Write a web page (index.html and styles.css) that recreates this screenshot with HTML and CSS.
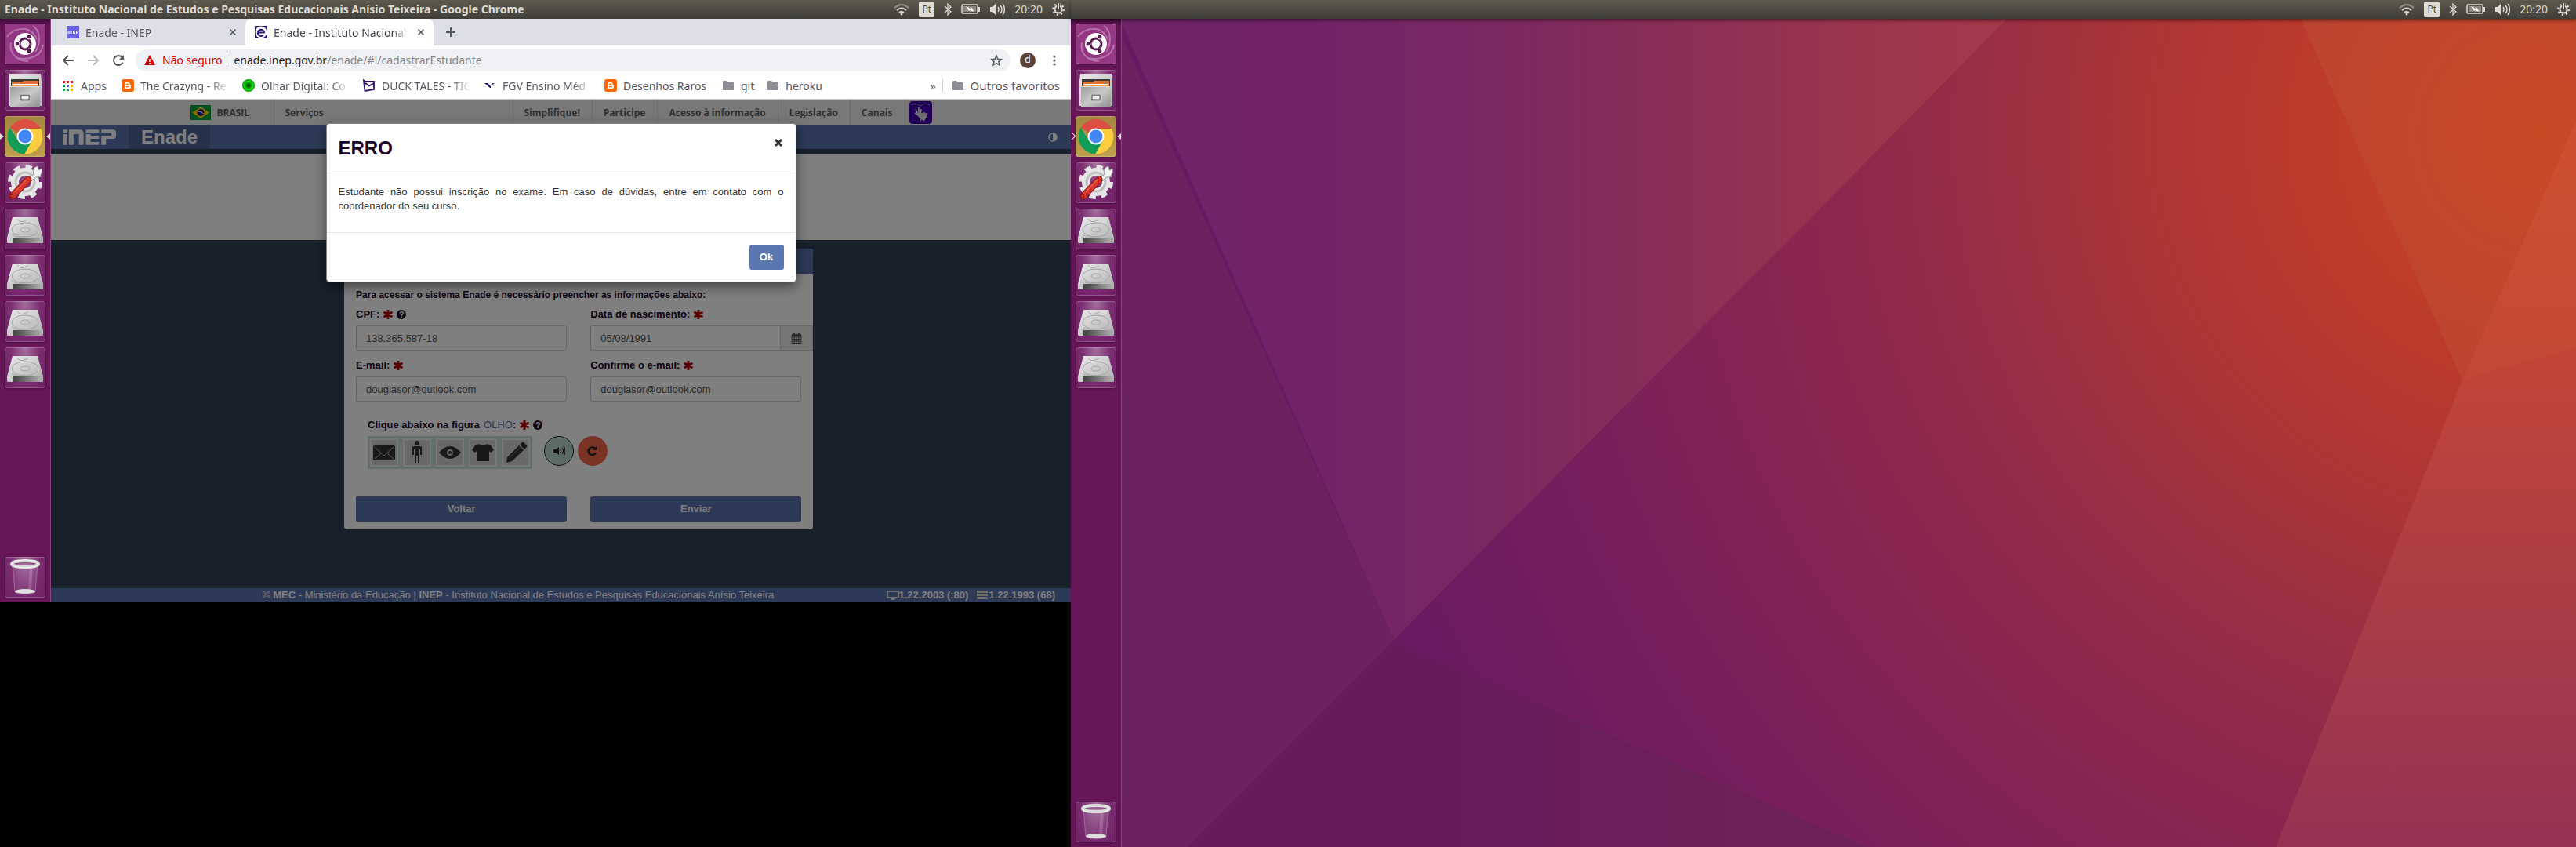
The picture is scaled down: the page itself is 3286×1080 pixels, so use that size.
FILE: index.html
```html
<!DOCTYPE html>
<html lang="pt-BR">
<head>
<meta charset="utf-8">
<title>Enade - Instituto Nacional de Estudos e Pesquisas Educacionais Anísio Teixeira</title>
<link rel="stylesheet" href="styles.css">
</head>
<body>
<svg class="sprite" aria-hidden="true">
  <defs>
    <linearGradient id="metal" x1="0" y1="0" x2="1" y2="1"><stop offset="0" stop-color="#ececec"/><stop offset="1" stop-color="#b4b4b4"/></linearGradient>
    <linearGradient id="edge" x1="0" x2="1"><stop offset="0" stop-color="#3b3b3b"/><stop offset=".25" stop-color="#4d4d4d"/><stop offset="1" stop-color="#b5b5b5"/></linearGradient>
    <linearGradient id="front" x1="0" y1="0" x2="1" y2="1"><stop offset="0" stop-color="#9a9a9a"/><stop offset=".5" stop-color="#c9c9c9"/><stop offset="1" stop-color="#8f8f8f"/></linearGradient>
    <radialGradient id="leaf"><stop offset="0" stop-color="#063b06"/><stop offset=".3" stop-color="#0a7a0a"/><stop offset=".7" stop-color="#0be00b"/><stop offset="1" stop-color="#078a07"/></radialGradient>
    <symbol id="i-ubuntu" viewBox="0 0 52 52">
      <g fill="none" stroke="#fff" stroke-opacity=".3" stroke-width="2"><path d="M3 17c8-12 30-16 38 3M49 27c-2 15-18 20-32 17M36 3c10 6 10 24 3 33M8 24c-3 14 8 24 22 24"/></g>
      <circle cx="26" cy="26" r="14" fill="#fff"/>
      <circle cx="26" cy="26" r="7" fill="none" stroke="#5d1450" stroke-width="3"/>
      <g fill="#5d1450" stroke="#fff" stroke-width="1"><circle cx="16" cy="26" r="3"/><circle cx="31" cy="17" r="3"/><circle cx="31" cy="35" r="3"/></g>
    </symbol>
    <symbol id="i-files" viewBox="0 0 52 52">
      <path d="M6 5h40l1 10v31H5V15z" fill="url(#metal)"/><path d="M8 12h36v12H8z" fill="#3f3a38"/>
      <path d="M9 16h13l2-2h19v9H9z" fill="#d9743a"/><path d="M9 18h34v5H9z" fill="#f3a057"/><path d="M11 18h31v1H11z" fill="#fff"/>
      <path d="M7 21h38v26H7z" fill="url(#front)"/><path d="M7 21h38v1H7z" fill="#ddd"/>
      <rect x="19" y="30" width="14" height="11" rx="2" fill="#aaa" stroke="#d5d5d5"/><rect x="21" y="33" width="10" height="5" fill="#eee" stroke="#4a4a4a"/>
    </symbol>
    <symbol id="i-chrome" viewBox="0 0 52 52">
      <path d="M26 26 6.500 15A22.500 22.500 0 0 1 46 16z" fill="#db4f43"/><path d="M26 16h20A22.500 22.500 0 0 1 25 48.500L35 31z" fill="#fdcd40"/>
      <path d="M6.500 15A22.500 22.500 0 0 0 25 48.500L35 31 17 31z" fill="#109d58"/><circle cx="26" cy="26" r="10.500" fill="#fff"/><circle cx="26" cy="26" r="8.500" fill="#4386f5"/>
    </symbol>
    <symbol id="i-tools" viewBox="0 0 52 52">
      <circle cx="26" cy="25" r="13" fill="none" stroke="#e6e6e6" stroke-width="10"/><circle cx="26" cy="25" r="19" fill="none" stroke="#e6e6e6" stroke-width="6" stroke-dasharray="8 6.920"/>
      <circle cx="26" cy="25" r="12" fill="none" stroke="#bdbdbd" stroke-width="3"/>
      <path d="M30 22 37 15c-2-5 0-9 5-10l1 5 4-2c2 6-3 12-8 11l-6 6z" fill="#f4f4f4" stroke="#999"/><path d="M10 43 30 22" stroke="#7d110c" stroke-width="9" stroke-linecap="round"/><path d="M10 43 30 22" stroke="#d7342c" stroke-width="7" stroke-linecap="round"/><path d="M13 38 28 22" stroke="#f08074" stroke-width="1"/><circle cx="9" cy="43" r="2" fill="none" stroke="#7d110c"/>
    </symbol>
    <symbol id="i-disk" viewBox="0 0 52 52">
      <path d="M10 11h32l7 26H3z" fill="url(#metal)"/><path d="M3 37h46v6q0 1-2 1H5q-2 0-2-1z" fill="url(#edge)"/><path d="M3 37h7v7H5q-2 0-2-1z" fill="#ccc"/>
      <g fill="none" stroke="#a3a3a3"><ellipse cx="26" cy="27" rx="17" ry="9"/><ellipse cx="26" cy="27" rx="6" ry="3"/><path d="M16 13c4 6 8 3 14 1M9 33c5 4 12 4 17 2"/></g>
    </symbol>
    <symbol id="i-trash" viewBox="0 0 52 52">
      <path d="M10 10h32l-3 35q-13 6-26 0z" fill="#fff" fill-opacity=".1" stroke="#fff" stroke-opacity=".25"/><path d="M34 12l-2 30" stroke="#fff" stroke-opacity=".15" stroke-width="4"/>
      <ellipse cx="26" cy="44" rx="13" ry="3" fill="#dedede"/><ellipse cx="26" cy="9" rx="17" ry="4" fill="none" stroke="#d9dcd6" stroke-width="4"/><ellipse cx="26" cy="9" rx="17" ry="5" fill="none" stroke="#fff" stroke-opacity=".8"/>
    </symbol>
    <symbol id="i-wifi" viewBox="0 0 20 16"><g fill="none" stroke="#dfdbd2" stroke-width="2"><path d="M1 6q9-8 18 0" stroke-opacity=".45"/><path d="M4 9q6-5 12 0M7 12q3-2 6 0"/></g><circle cx="10" cy="14" r="1.500" fill="#dfdbd2"/></symbol>
    <symbol id="i-bt" viewBox="0 0 10 16"><path d="M1 4l8 7-4 4V1l4 4-8 7" fill="none" stroke="#dfdbd2" stroke-width="1.300"/></symbol>
    <symbol id="i-batt" viewBox="0 0 24 14"><rect x="1" y="1" width="20" height="11" rx="1" fill="none" stroke="#dfdbd2" stroke-width="1.500"/><rect x="3" y="3" width="16" height="7" fill="#8d8a82"/><path d="M22 4h2v6h-2z" fill="#dfdbd2"/><path d="M6 3l6 3V3l5 7-6-2-1 1z" fill="#fff"/></symbol>
    <symbol id="i-vol" viewBox="0 0 20 16"><path d="M1 5h3l4-4v14l-4-4H1z" fill="#dfdbd2"/><path d="M11 5q2 3 0 6M14 3q4 5 0 10M17 1q5 7 0 14" fill="none" stroke="#dfdbd2" stroke-width="1.500"/></symbol>
    <symbol id="i-gear" viewBox="0 0 16 16"><circle cx="8" cy="8" r="4.500" fill="none" stroke="#dfdbd2" stroke-width="2"/><circle cx="8" cy="8" r="6.700" fill="none" stroke="#dfdbd2" stroke-width="2.500" stroke-dasharray="2.200 3.060"/><path d="M6 0h4v8H6z" fill="#4a4842"/><path d="M7 0h2v8H7z" fill="#dfdbd2"/></symbol>
    <symbol id="i-x" viewBox="0 0 16 16"><path d="M4.500 4.500l7 7M11.500 4.500l-7 7" stroke="#55585d" stroke-width="1.600"/></symbol>
    <symbol id="i-blogger" viewBox="0 0 16 16"><rect width="16" height="16" rx="3" fill="#ff6700"/><path d="M6 4h2.500a2 2 0 0 1 2 2v.700q0 .800.800.800t.700.700V10a2 2 0 0 1-2 2H6a2 2 0 0 1-2-2V6a2 2 0 0 1 2-2z" fill="#fff"/><path d="M6.300 6.300h2M6.300 9.600h3.200" stroke="#ff6700" stroke-width="1.200" stroke-linecap="round"/></symbol>
    <symbol id="i-folder" viewBox="0 0 16 16"><path d="M1 3q0-1 1-1h4l2 2h6q1 0 1 1v8q0 1-1 1H2q-1 0-1-1z" fill="#8d8d96"/></symbol>
    <symbol id="i-ast" viewBox="0 0 12 12"><path d="M6 1v10M1.700 3.500l8.600 5M10.300 3.500l-8.600 5" stroke="#b00000" stroke-width="3" stroke-linecap="round"/></symbol>
  </defs>
</svg>

<div class="desktop">
  <section class="monitor monitor-left">
    <header class="panel">
      <h1 class="panel-title">Enade - Instituto Nacional de Estudos e Pesquisas Educacionais Anísio Teixeira - Google Chrome</h1>
      <div class="status">
        <svg class="s20"><use href="#i-wifi"/></svg><span class="lang">Pt</span><svg class="s10"><use href="#i-bt"/></svg><svg class="s24"><use href="#i-batt"/></svg><svg class="s20"><use href="#i-vol"/></svg><time>20:20</time><svg class="s16"><use href="#i-gear"/></svg>
      </div>
    </header>
    <div class="workspace">
      <nav class="launcher" aria-label="Lançador">
        <button class="tile ubuntu" aria-label="Pesquisar"><svg><use href="#i-ubuntu"/></svg></button>
        <button class="tile" aria-label="Arquivos"><svg><use href="#i-files"/></svg></button>
        <button class="tile chrome" aria-label="Google Chrome"><svg><use href="#i-chrome"/></svg></button>
        <button class="tile" aria-label="Configurações"><svg><use href="#i-tools"/></svg></button>
        <button class="tile" aria-label="Disco 1"><svg><use href="#i-disk"/></svg></button>
        <button class="tile" aria-label="Disco 2"><svg><use href="#i-disk"/></svg></button>
        <button class="tile" aria-label="Disco 3"><svg><use href="#i-disk"/></svg></button>
        <button class="tile" aria-label="Disco 4"><svg><use href="#i-disk"/></svg></button>
        <button class="tile trash" aria-label="Lixeira"><svg><use href="#i-trash"/></svg></button>
      </nav>
      <main class="browser">
        <div class="tabs">
          <div class="tab"><svg class="s16" viewBox="0 0 16 16"><path fill="#6b62e6" d="M0 0h16v16H0z"/><path d="M2 6v4M4 10V6.500h2V10M11 6.500H8.500v3H11M8.500 8H11M12.500 10V6.500h2v2h-2" fill="none" stroke="#fff"/></svg><span class="tab-title">Enade - INEP</span><button aria-label="Fechar guia"><svg class="s16"><use href="#i-x"/></svg></button></div>
          <div class="tab active"><svg class="s16" viewBox="0 0 16 16"><path fill="#2a1a80" d="M0 0h16v16H0z"/><circle cx="8" cy="8" r="7.500" fill="#fff"/><path d="M4 8.500h8A4 4 0 1 0 11 11.500" fill="none" stroke="#2a1a80" stroke-width="2.200"/><path d="M12 9.500h4v2h-4z" fill="#fff"/></svg><span class="tab-title">Enade - Instituto Nacional</span><button aria-label="Fechar guia"><svg class="s16"><use href="#i-x"/></svg></button></div>
          <button class="new-tab" aria-label="Nova guia"><svg class="s16" viewBox="0 0 16 16"><path d="M8 2v12M2 8h12" stroke="#55585d" stroke-width="2"/></svg></button>
        </div>
        <div class="toolbar">
          <button aria-label="Voltar"><svg class="s16" viewBox="0 0 16 16"><path d="M15 8H2M8 2 2 8l6 6" fill="none" stroke="#55585d" stroke-width="2"/></svg></button>
          <button aria-label="Avançar"><svg class="s16" viewBox="0 0 16 16"><path d="M1 8h13M8 2l6 6-6 6" fill="none" stroke="#babcbe" stroke-width="2"/></svg></button>
          <button aria-label="Recarregar"><svg class="s16" viewBox="0 0 16 16"><path d="M13.500 10.500A6 6 0 1 1 12.500 4" fill="none" stroke="#55585d" stroke-width="2"/><path d="M15 1v6H9z" fill="#55585d"/></svg></button>
          <div class="omnibox">
            <svg class="s16" viewBox="0 0 16 16"><path d="M8 1l7 13H1z" fill="#d50000"/><path d="M8 6v4M8 11v2" stroke="#fff" stroke-width="1.500"/></svg>
            <span class="unsafe">Não seguro</span>
            <span class="url">enade.inep.gov.br<span>/enade/#!/cadastrarEstudante</span></span>
            <svg class="s16 star" viewBox="0 0 16 16"><path d="M8 2l1.800 4.200 4.500.400-3.400 3 1 4.400L8 11.600 4.100 14l1-4.400-3.400-3 4.500-.400z" fill="none" stroke="#55585d" stroke-width="1.500"/></svg>
          </div>
          <span class="avatar">d</span>
          <button aria-label="Menu"><svg class="s16" viewBox="0 0 16 16"><g fill="#55585d"><circle cx="8" cy="3" r="1.600"/><circle cx="8" cy="8" r="1.600"/><circle cx="8" cy="13" r="1.600"/></g></svg></button>
        </div>
        <nav class="bookmarks" aria-label="Favoritos">
          <a href="#" class="apps"><svg class="s16" viewBox="0 0 16 16"><path fill="#e8181c" d="M1 2h3v3H1zM6 2h3v3H6zM11 2h3v3h-3z"/><path fill="#0aa152" d="M1 7h3v3H1zM1 12h3v3H1zM6 12h3v3H6z"/><path fill="#5b4bf0" d="M6 7h3v3H6z"/><path fill="#e6b800" d="M11 7h3v3h-3zM11 12h3v3h-3z"/></svg><span>Apps</span></a>
          <a href="#" class="wide"><svg class="s16"><use href="#i-blogger"/></svg><span>The Crazyng - Re</span></a>
          <a href="#" class="wide"><svg class="s16" viewBox="0 0 16 16"><circle cx="8" cy="8" r="8" fill="url(#leaf)"/></svg><span>Olhar Digital: Co</span></a>
          <a href="#" class="wide"><svg class="s16" viewBox="0 0 16 16"><path d="M1 1.500 3 3H14V13L2.500 15zM3 5l5 3.500L14 5" fill="none" stroke="#35106b" stroke-width="1.800"/></svg><span>DUCK TALES - TIC</span></a>
          <a href="#" class="wide"><svg class="s16" viewBox="0 0 16 16"><path d="M1 5h4l4 4v2H8zM9 8l2-3h3l-3 2z" fill="#20107a"/></svg><span>FGV Ensino Méd</span></a>
          <a href="#" class="raros"><svg class="s16"><use href="#i-blogger"/></svg><span>Desenhos Raros</span></a>
          <a href="#"><svg class="s16"><use href="#i-folder"/></svg><span>git</span></a>
          <a href="#"><svg class="s16"><use href="#i-folder"/></svg><span>heroku</span></a>
          <button class="more" aria-label="Mais favoritos">»</button>
          <a href="#" class="others"><svg class="s16"><use href="#i-folder"/></svg><span>Outros favoritos</span></a>
        </nav>

        <div class="page">
          <nav class="barra">
            <div class="barra-inner">
              <a href="#" class="brasil"><svg viewBox="0 0 26 19"><path d="M0 0h26v19H0z" fill="#00a040"/><path d="M13 2l11 7.500L13 17 2 9.500z" fill="#ffdf00"/><circle cx="13" cy="9.500" r="4.500" fill="#2a1a80"/><path d="M9 8q5 0 8 3" fill="none" stroke="#fff"/></svg>BRASIL</a>
              <a href="#" class="grow">Serviços</a><a href="#">Simplifique!</a><a href="#">Participe</a><a href="#">Acesso à informação</a><a href="#">Legislação</a><a href="#">Canais</a>
              <a href="#" class="libras" aria-label="VLibras"><svg viewBox="0 0 29 29"><rect width="29" height="29" rx="4" fill="#4200b0"/><path d="M3 5q5-4 11 1 6-5 12-1" fill="none" stroke="#a99ad8"/><path d="M8 10l3 7M12 8v8M15 10l-1 7M7 15l5 4" stroke="#fff" stroke-width="1.500"/><path d="M11 15h5l3-1 3 2-1 6-3 3-6-4z" fill="#ddd"/><path d="M16 20l-2 5M19 20v5M21 18l2 4" stroke="#fff" stroke-width="1.200"/></svg></a>
            </div>
          </nav>
          <header class="site-head">
            <a href="#" class="inep" aria-label="INEP"><svg viewBox="0 0 70 20"><path d="M0 0h6v4H0zM0 6h6v14H0zM8 0h13q6 0 6 5v15h-6V6h-7v14H8zM30 0h17v4H30zM30 6h6v2h11v4H36v4h11v4H30zM50 0h15q4 0 4 4v4q0 4-4 4h-9v8h-6V8h13V4H50z" fill="#fff"/></svg></a>
            <a href="#" class="brand">Enade</a>
            <button class="contrast" aria-label="Alto contraste"><svg viewBox="0 0 12 12"><circle cx="6" cy="6" r="5" fill="none" stroke="#fff" stroke-width="1.500"/><path d="M6 1a5 5 0 0 1 0 10z" fill="#fff"/></svg></button>
          </header>
          <div class="banner"></div>
          <form class="card">
            <div class="card-head"></div>
            <p class="intro">Para acessar o sistema Enade é necessário preencher as informações abaixo:</p>
            <div class="fields">
              <div class="field"><label for="cpf">CPF: <svg class="ast"><use href="#i-ast"/></svg> <span class="help">?</span></label><input id="cpf" type="text" value="138.365.587-18"></div>
              <div class="field"><label for="nasc">Data de nascimento: <svg class="ast"><use href="#i-ast"/></svg></label><div class="group"><input id="nasc" type="text" value="05/08/1991"><button type="button" aria-label="Abrir calendário"><svg viewBox="0 0 14 14"><path d="M1 3h12v10.500H1zM1 6h12M1 8.500h12M1 11h12M4 5v8M7 5v8M10 5v8" fill="none" stroke="#555"/><path d="M1 2h12v3H1zM3 0h2v3H3zM9 0h2v3H9z" fill="#555"/></svg></button></div></div>
              <div class="field"><label for="mail">E-mail: <svg class="ast"><use href="#i-ast"/></svg></label><input id="mail" type="email" value="douglasor@outlook.com"></div>
              <div class="field"><label for="mail2">Confirme o e-mail: <svg class="ast"><use href="#i-ast"/></svg></label><input id="mail2" type="email" value="douglasor@outlook.com"></div>
            </div>
            <div class="captcha">
              <p>Clique abaixo na figura <span class="olho">OLHO</span>: <svg class="ast"><use href="#i-ast"/></svg> <span class="help">?</span></p>
              <div class="choices">
                <div class="figures">
                  <button type="button" aria-label="Envelope"><svg viewBox="0 0 32 32"><rect x="2" y="7" width="28" height="19" rx="2" fill="#333"/><path d="M4 9l12 11L28 9M4 24l8-7M28 24l-8-7" fill="none" stroke="#bbb"/></svg></button>
                  <button type="button" aria-label="Pessoa"><svg viewBox="0 0 32 32"><circle cx="16" cy="4" r="3" fill="#333"/><path d="M12 8h8q2 0 2 2v9h-2v-7h-1v18h-2V20h-2v10h-2V12h-1v7h-2v-9q0-2 2-2z" fill="#333"/></svg></button>
                  <button type="button" aria-label="Olho"><svg viewBox="0 0 32 32"><path d="M2 16q7-8 14-8t14 8q-7 8-14 8T2 16z" fill="#333"/><circle cx="16" cy="16" r="4" fill="#d0d0d0"/><circle cx="16" cy="16" r="2" fill="#333"/></svg></button>
                  <button type="button" aria-label="Camiseta"><svg viewBox="0 0 32 32"><path d="M11 5q5 4 10 0l5 2 4 6-4 3-2-2v13H8V14l-2 2-4-3 4-6z" fill="#333"/></svg></button>
                  <button type="button" aria-label="Lápis"><svg viewBox="0 0 32 32"><path d="M4 29l1-7L20 7l6 6-15 14zM21 6l3-3q1-1 2 0l4 4q1 1 0 2l-3 3z" fill="#333"/><path d="M8 23L22 9" stroke="#777"/></svg></button>
                </div>
                <button type="button" class="round audio" aria-label="Ouvir"><svg viewBox="0 0 16 14"><path d="M1 5h3l4-3v10L4 9H1z" fill="#222"/><path d="M10 5q1 2 0 4M12 3q3 4 0 8M14 1q4 6 0 12" fill="none" stroke="#222" stroke-width="1.200"/></svg></button>
                <button type="button" class="round reload" aria-label="Nova figura"><svg viewBox="0 0 16 14"><path d="M12 9.500A5 5 0 1 1 11 3.500" fill="none" stroke="#222" stroke-width="2.400"/><path d="M14 0v6H8z" fill="#222"/></svg></button>
              </div>
            </div>
            <div class="actions"><button type="button">Voltar</button><button type="submit">Enviar</button></div>
          </form>
          <footer class="site-foot">
            <p>© <b>MEC</b> - Ministério da Educação | <b>INEP</b> - Instituto Nacional de Estudos e Pesquisas Educacionais Anísio Teixeira</p>
            <div class="versions"><span><svg viewBox="0 0 16 12"><path d="M1 1h14v8H1zM5 11h6M8 9v2" fill="none" stroke="#fff" stroke-width="1.500"/></svg>1.22.2003 (:80)</span><span><svg viewBox="0 0 16 12"><path d="M1 0h14v3H1zM1 4h14v3H1zM1 8h14v3H1z" fill="#ddd"/></svg>1.22.1993 (68)</span></div>
          </footer>
          <div class="backdrop">
            <div class="modal" role="dialog" aria-labelledby="erro">
              <div class="modal-head"><h2 id="erro">ERRO</h2><button aria-label="Fechar"><svg viewBox="0 0 12 12"><path d="M2 2l8 8M10 2l-8 8" stroke="#333" stroke-width="3"/></svg></button></div>
              <div class="modal-body"><p>Estudante não possui inscrição no exame. Em caso de dúvidas, entre em contato com o coordenador do seu curso.</p></div>
              <div class="modal-foot"><button>Ok</button></div>
            </div>
          </div>
        </div>
      </main>
    </div>
  </section>

  <section class="monitor monitor-right">
    <svg class="wallpaper" viewBox="0 0 1920 1080" preserveAspectRatio="none" aria-hidden="true">
      <defs>
        <radialGradient id="w1" gradientUnits="userSpaceOnUse" cx="1870" cy="170" r="1600"><stop offset="0" stop-color="#c94925"/><stop offset=".2" stop-color="#ba3a2c"/><stop offset=".32" stop-color="#ab3536"/><stop offset=".48" stop-color="#942c48"/><stop offset=".6" stop-color="#882650"/><stop offset=".8" stop-color="#781e5b"/><stop offset="1" stop-color="#681964"/></radialGradient>
        <linearGradient id="w2" gradientUnits="userSpaceOnUse" x1="66" x2="1193" y1="0" y2="0"><stop offset="0" stop-color="#6f2468"/><stop offset=".2" stop-color="#712369"/><stop offset=".4" stop-color="#7a2862"/><stop offset=".62" stop-color="#8a2e57"/><stop offset=".83" stop-color="#9a364d"/><stop offset="1" stop-color="#a33849"/></linearGradient>
        <linearGradient id="w3" gradientUnits="userSpaceOnUse" x1="0" x2="0" y1="444" y2="1080"><stop offset="0" stop-color="#c24636"/><stop offset="1" stop-color="#943354"/></linearGradient>
        <linearGradient id="w4" gradientUnits="userSpaceOnUse" x1="500" x2="900" y1="0" y2="0"><stop offset="0" stop-color="#661b5c"/><stop offset="1" stop-color="#6e2156"/></linearGradient>
        <radialGradient id="w5" gradientUnits="userSpaceOnUse" cx="1870" cy="170" r="330"><stop offset="0" stop-color="#c94925"/><stop offset="1" stop-color="#bb4532"/></radialGradient>
        <linearGradient id="w6" gradientUnits="userSpaceOnUse" x1="0" x2="0" y1="200" y2="484"><stop offset="0" stop-color="#cc4f30"/><stop offset="1" stop-color="#c24937"/></linearGradient>
      </defs>
      <path fill="url(#w1)" d="M0 0h1920v1080H0z"/>
      <path fill="url(#w2)" d="M52 0h1166L412 816z"/>
      <path fill="#6c2261" d="M0 0h52l14 48 346 768-263 264H0z"/>
      <path fill="url(#w4)" d="M412 816l603 264H149z"/>
      <path fill="url(#w5)" d="M1558 0h362v155l-145 329z"/>
      <path fill="url(#w6)" d="M1920 155v289l-145 40z"/>
      <path fill="url(#w3)" d="M1775 484l145-40v636h-383z"/>
    </svg>
    <header class="panel">
      <div class="status">
        <svg class="s20"><use href="#i-wifi"/></svg><span class="lang">Pt</span><svg class="s10"><use href="#i-bt"/></svg><svg class="s24"><use href="#i-batt"/></svg><svg class="s20"><use href="#i-vol"/></svg><time>20:20</time><svg class="s16"><use href="#i-gear"/></svg>
      </div>
    </header>
    <div class="workspace">
      <nav class="launcher" aria-label="Lançador do segundo monitor">
        <button class="tile ubuntu" aria-label="Pesquisar"><svg><use href="#i-ubuntu"/></svg></button>
        <button class="tile" aria-label="Arquivos"><svg><use href="#i-files"/></svg></button>
        <button class="tile chrome hollow" aria-label="Google Chrome"><svg><use href="#i-chrome"/></svg></button>
        <button class="tile" aria-label="Configurações"><svg><use href="#i-tools"/></svg></button>
        <button class="tile" aria-label="Disco 1"><svg><use href="#i-disk"/></svg></button>
        <button class="tile" aria-label="Disco 2"><svg><use href="#i-disk"/></svg></button>
        <button class="tile" aria-label="Disco 3"><svg><use href="#i-disk"/></svg></button>
        <button class="tile" aria-label="Disco 4"><svg><use href="#i-disk"/></svg></button>
        <button class="tile trash" aria-label="Lixeira"><svg><use href="#i-trash"/></svg></button>
      </nav>
    </div>
  </section>
</div>
</body>
</html>
```
FILE: styles.css
```css
* { box-sizing: border-box; }
body { margin: 0; background: #000; font-family: "Noto Sans", sans-serif; }
h1, h2, p { margin: 0; }
button { border: 0; padding: 0; background: none; font: inherit; cursor: pointer; }
a { color: inherit; text-decoration: none; }
svg { display: block; flex: none; }
.sprite { position: absolute; width: 0; height: 0; }
.s10 { width: 10px; height: 16px; }
.s16 { width: 16px; height: 16px; }
.s20 { width: 20px; height: 16px; }
.s24 { width: 24px; height: 14px; }

/* Desktop: two monitors side by side */
.desktop { display: flex; align-items: flex-start; }
.monitor { position: relative; display: flex; flex-direction: column; min-width: 0; }
.monitor-left { flex: 1366 1 0; aspect-ratio: 1366 / 768; }
.monitor-right { flex: 1920 1 0; aspect-ratio: 1920 / 1080; }
.wallpaper { position: absolute; inset: 0; width: 100%; height: 100%; }
.panel { position: relative; z-index: 2; display: flex; align-items: center; height: 24px; padding: 0 8px 0 6px; background: linear-gradient(#5d5a4f, #3f3e39); color: #dfdbd2; }
.monitor-right .panel { box-shadow: 0 2px 4px rgba(0, 0, 0, .5); }
.panel-title { font-size: 14px; line-height: 24px; font-weight: 700; white-space: nowrap; }
.status { display: flex; align-items: center; gap: 12px; margin-left: auto; font-size: 14px; line-height: 24px; }
.lang { width: 20px; height: 20px; border-radius: 2px; background: #dfdbd2; color: #4a4842; font-size: 12px; line-height: 20px; text-align: center; }
.workspace { position: relative; display: flex; flex: 1; min-height: 0; }

/* Launcher */
.launcher { display: flex; flex-direction: column; gap: 7px; width: 65px; padding: 6px; border-right: 1px solid #85437c; background: linear-gradient(#3f0c39, #671758 10px, #671758); }
.tile { position: relative; width: 52px; height: 52px; border-radius: 4px; background: radial-gradient(ellipse at 50% 0, #a5719e, #7b2f72 50%, #6d1f62); box-shadow: inset 0 0 0 1px rgba(255, 255, 255, .2), 0 1px 3px rgba(0, 0, 0, .3); }
.tile svg { width: 52px; height: 52px; }
.ubuntu { background: radial-gradient(circle, #8e2d7c, #9a3d89); }
.chrome { background: linear-gradient(#a3853f, #bfa04d); }
.chrome::before, .chrome::after { content: ""; position: absolute; top: 22px; border: 4px solid transparent; }
.chrome::before { left: -6px; border-left: 5px solid #ddd; border-right: 0; }
.chrome::after { right: -6px; border-right: 5px solid #ddd; border-left: 0; }
.hollow::before { left: -8px; width: 6px; height: 6px; border: solid #ddd; border-width: 1px 1px 0 0; transform: rotate(45deg); }
.trash { margin-top: auto; }

/* Browser chrome */
.browser { display: flex; flex: 1; flex-direction: column; min-width: 0; background: #fff; color: #5a5560; font-size: 14px; }
.tabs { display: flex; height: 34px; padding-left: 8px; background: #dedee6; }
.tab { display: flex; align-items: center; gap: 8px; width: 240px; padding: 0 8px 0 12px; }
.tab.active { border-radius: 8px 8px 0 0; background: #fff; color: #45404a; }
.tab-title { flex: 1; overflow: hidden; white-space: nowrap; -webkit-mask-image: linear-gradient(to right, #000 88%, transparent); mask-image: linear-gradient(to right, #000 88%, transparent); }
.new-tab { padding: 0 14px; }
.toolbar { display: flex; align-items: center; gap: 16px; height: 38px; padding: 0 13px 0 14px; }
.omnibox { display: flex; flex: 1; align-items: center; gap: 8px; height: 28px; margin-left: -2px; padding: 0 10px; border-radius: 14px; background: #f0f1f4; white-space: nowrap; }
.unsafe { padding-right: 6px; border-right: 1px solid #9a9a9f; color: #d50000; line-height: 16px; }
.url { color: #201c26; line-height: 16px; }
.url span { color: #858389; }
.star { margin-left: auto; }
.avatar { width: 20px; height: 20px; margin-left: -4px; border-radius: 50%; background: #5d4037; color: #fff; font-size: 12px; line-height: 18px; text-align: center; }
.bookmarks { display: flex; align-items: center; gap: 16px; height: 31px; padding: 0 14px 4px; border-bottom: 1px solid #c2c4c2; }
.bookmarks a { display: flex; align-items: center; gap: 8px; white-space: nowrap; }
.bookmarks .apps { min-width: 60px; }
.bookmarks .wide { width: 138px; }
.bookmarks .raros { min-width: 134px; }
.wide span { flex: 1; overflow: hidden; -webkit-mask-image: linear-gradient(to right, #000 78%, transparent); mask-image: linear-gradient(to right, #000 78%, transparent); }
.more { margin-left: auto; margin-right: -8px; color: #55585d; }
.bookmarks .others { padding-left: 11px; border-left: 1px solid #ccc; font-size: 15px; line-height: 16px; }

/* Web page */
.page { position: relative; display: flex; flex: 1; flex-direction: column; background: #2e4056; font: 13px/18px "Liberation Sans", Arial, sans-serif; color: #333; }
.barra { height: 33px; background: #f1f1f1; font: bold 12px/33px "Open Sans", sans-serif; color: #606060; }
.barra-inner { display: flex; width: 946px; margin: 0 auto; white-space: nowrap; }
.barra-inner a { padding: 0 15px 0 14px; border-left: 1px solid #d8d8d8; }
.barra-inner .brasil { display: flex; align-items: center; gap: 8px; width: 106px; padding: 0; border: 0; }
.brasil svg { width: 26px; height: 19px; }
.barra-inner .grow { flex: 1; }
.barra-inner .libras { padding: 2px 0 0 5px; }
.libras svg { width: 29px; height: 29px; }
.site-head { display: flex; align-items: center; height: 37px; border-bottom: 7px solid #2e4056; background: #5b74ae; }
.inep { padding: 0 15px; }
.inep svg { width: 69px; height: 20px; }
.brand { padding: 0 16px; background: #4c6493; color: #fff; font-size: 24px; line-height: 30px; font-weight: 700; }
.contrast { margin-left: auto; padding-right: 17px; }
.contrast svg { width: 12px; height: 12px; }
.banner { height: 109px; background: #fff; }
.card { width: 46%; margin: 11px 0 0 28.75%; border-radius: 4px; background: #fff; overflow: hidden; color: #1a0a28; }
.card-head { height: 33px; border-bottom: 1px solid #221440; background: #5b74ae; }
.intro { padding: 17px 15px 0; font-size: 12px; font-weight: 700; }
.fields { display: grid; grid-template-columns: 1fr 1fr; gap: 10px 30px; padding: 7px 15px 0; }
.field label, .captcha p { display: flex; align-items: center; gap: 5px; height: 18px; font-weight: 700; }
.field input { display: block; width: 100%; height: 32px; margin-top: 5px; padding: 0 12px; border: 1px solid #ccc; border-radius: 3px; background: #fff; color: #555; font: inherit; }
.field .group { display: flex; margin: 5px -15px 0 0; }
.group input { flex: 1; width: auto; min-width: 0; margin: 0; border-radius: 3px 0 0 3px; }
.group button { display: grid; place-items: center; width: 41px; border: 1px solid #ccc; border-left: 0; background: #eee; }
.group svg { width: 14px; height: 14px; }
.ast { width: 12px; height: 12px; }
.help { width: 12px; height: 12px; border-radius: 50%; background: #1a0a28; color: #fff; font-size: 11px; line-height: 12px; text-align: center; }
.olho { margin-right: -5px; color: #5b74ae; font-weight: 400; }
.captcha { padding: 21px 30px 0; }
.choices { display: flex; align-items: flex-start; margin-top: 5px; }
.figures { display: flex; gap: 6px; margin-right: 15px; padding: 3px; background: #c6dedc; }
.figures button { width: 36px; height: 36px; border: 2px solid #f0f0f0; background: #d2d2d2; }
.figures svg { width: 32px; height: 32px; }
.round { display: grid; place-items: center; width: 38px; height: 38px; margin-right: 5px; border-radius: 50%; }
.round svg { width: 16px; height: 14px; }
.audio { border: 1px solid #222; background: #b9d6cf; }
.reload { background: #f26446; }
.actions { display: grid; grid-template-columns: 1fr 1fr; gap: 30px; padding: 35px 15px 10px; }
.actions button { height: 32px; border-radius: 3px; background: #5b74ae; color: #fff; font-weight: 700; }
.site-foot { display: flex; align-items: center; height: 18px; margin-top: auto; padding: 0 20px; background: #5b74ae; color: #fff; white-space: nowrap; }
.site-foot p { margin-left: 250px; }
.versions { display: flex; gap: 10px; margin-left: auto; font-weight: 700; }
.versions span { display: flex; align-items: center; }
.versions svg { width: 16px; height: 12px; }

/* Error dialog */
.backdrop { position: absolute; inset: 0; padding-top: 30px; background: rgba(0, 0, 0, .5); }
.modal { width: 600px; margin: 0 auto; border: 1px solid #888; border-radius: 4px; background: #fff; background-clip: padding-box; box-shadow: 0 5px 15px rgba(0, 0, 0, .5); }
.modal-head { display: flex; align-items: flex-start; justify-content: space-between; height: 63px; padding: 15px; border-bottom: 1px solid #e5e5e5; }
.modal-head h2 { color: #1a0028; font-size: 24px; line-height: 32px; }
.modal-head svg { width: 12px; height: 12px; margin: 3px 1px 0 0; }
.modal-body { padding: 15px 15px 24px; text-align: justify; }
.modal-foot { display: flex; justify-content: flex-end; padding: 15px; border-top: 1px solid #e5e5e5; }
.modal-foot button { width: 44px; height: 32px; border-radius: 3px; background: #5b77af; color: #fff; font-weight: 700; }
```
